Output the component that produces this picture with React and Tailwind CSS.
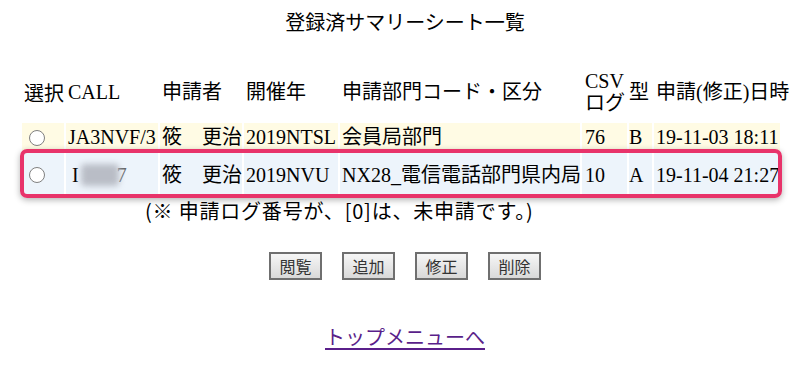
import React from "react";

const serif = { fontFamily: '"Liberation Serif", "Noto Sans CJK JP", serif' };

function Radio() {
  return (
    <span className="block shrink-0 w-[16px] h-[16px] rounded-full border-[1.5px] border-[#808080] bg-white ml-[5px] mt-[1px]" />
  );
}

export default function App() {
  const cols = "grid grid-cols-[42px_92px_82px_94px_240px_45px_23px_126px] gap-[2px]";
  const hcell = "h-[54px] flex items-center pb-[4px] px-[2px] whitespace-nowrap leading-[23px]";
  const c1 = "h-[28px] flex items-center px-[2px] whitespace-nowrap bg-[#fffbe4]";
  const c2 = "h-[43px] flex items-center px-[2px] whitespace-nowrap bg-[#edf4fb]";
  return (
    <div className="w-[794px] h-[366px] bg-white text-[20px] text-black overflow-hidden" style={serif}>
      <div className="pl-[16px] pt-[10px] flex justify-center leading-[24px]" style={{ fontFamily: '"Noto Sans CJK JP", sans-serif' }}>
        登録済サマリーシート一覧
      </div>

      <div className="relative ml-[22px] mt-[33px] w-[758px]">
        <div className={cols}>
          <div className={hcell} style={{ fontFamily: '"Noto Sans CJK JP", sans-serif' }}>選択</div>
          <div className={hcell}>CALL</div>
          <div className={hcell}>申請者</div>
          <div className={hcell}>開催年</div>
          <div className={hcell}>申請部門コード・区分</div>
          <div className={hcell + " flex-col !items-start justify-center pl-[3px]"}>
            <span className="leading-[22px]">CSV</span>
            <span className="leading-[22px]">ログ</span>
          </div>
          <div className={hcell + " !px-0"}>型</div>
          <div className={hcell}>申請(修正)日時</div>

          <div className={c1}><Radio /></div>
          <div className={c1}>JA3NVF/3</div>
          <div className={c1}>筱　更治</div>
          <div className={c1}>2019NTSL</div>
          <div className={c1}>会員局部門</div>
          <div className={c1 + " pl-[3px]"}>76</div>
          <div className={c1 + " !px-0"}>B</div>
          <div className={c1}>19-11-03 18:11</div>

          <div className={c2}><Radio /></div>
          <div className={c2}>
            <span className="pl-[4px]">I</span>
            <span className="inline-block w-[38px] h-[22px] ml-[2px] bg-[#b9bdc6] blur-[3px] rounded-sm" />
            <span className="text-[#666] -ml-[2px]">7</span>
          </div>
          <div className={c2}>筱　更治</div>
          <div className={c2}>2019NVU</div>
          <div className={c2}>NX28_電信電話部門県内局</div>
          <div className={c2 + " pl-[3px]"}>10</div>
          <div className={c2 + " !px-0"}>A</div>
          <div className={c2}>19-11-04 21:27</div>
        </div>
        <div className="absolute left-[-2px] top-[82px] w-[762px] h-[49px] rounded-[7px] border-[4px] border-[#e8336a] shadow-[0_2px_6px_rgba(0,0,0,0.3)] pointer-events-none" />
      </div>

      <div className="ml-[145px] mt-[3px] leading-[24px] whitespace-nowrap tracking-[0.8px]" style={{ fontFamily: '"Noto Sans CJK JP", sans-serif' }}>
        (※ 申請ログ番号が、[0]は、未申請です。)
      </div>

      <div className="pl-[16px] mt-[29px] flex justify-center gap-[20px]" style={{ fontFamily: '"Noto Sans CJK JP", sans-serif' }}>
        {["閲覧", "追加", "修正", "削除"].map((t) => (
          <button
            key={t}
            className="h-[28px] w-[53px] border-2 border-[#6f6f6f] bg-gradient-to-b from-[#f6f6f6] to-[#d9d9d9] text-[16px] leading-none text-[#333]"
          >
            {t}
          </button>
        ))}
      </div>

      <div className="pl-[16px] mt-[45px] flex justify-center leading-[24px]" style={{ fontFamily: '"Noto Sans CJK JP", sans-serif' }}>
        <a href="#" className="text-[#5a1f8a] underline underline-offset-[3px]">トップメニューへ</a>
      </div>
    </div>
  );
}
